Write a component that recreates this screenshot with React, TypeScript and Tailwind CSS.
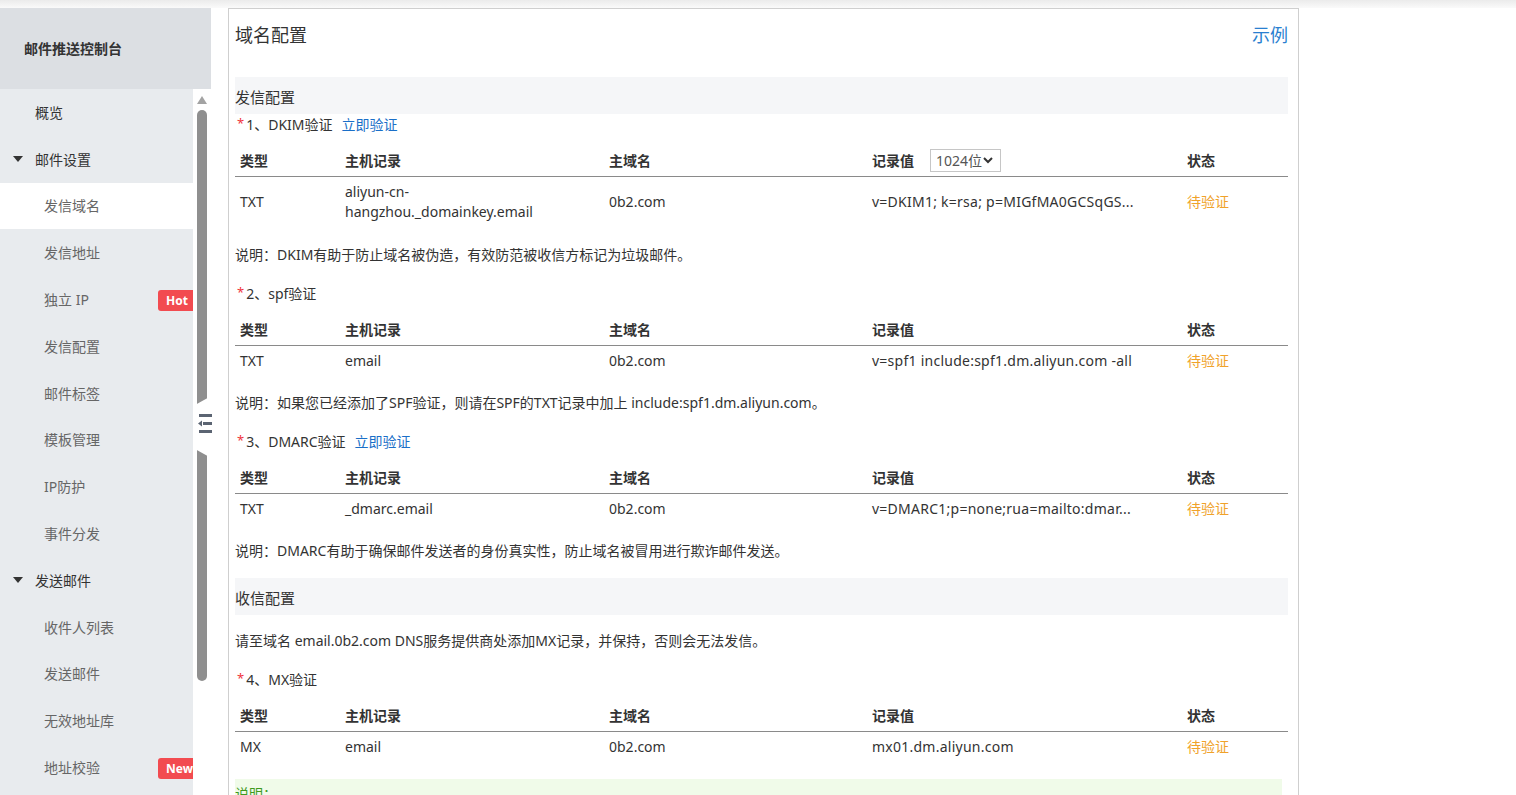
import React from 'react';

const FONT = '"Noto Sans", "Noto Sans CJK SC", sans-serif';

type MenuItem = {
    label: string;
    level: 0 | 1;
    caret?: boolean;
    active?: boolean;
    badge?: 'Hot' | 'New';
};

const menu: MenuItem[] = [
    { label: '概览', level: 0 },
    { label: '邮件设置', level: 0, caret: true },
    { label: '发信域名', level: 1, active: true },
    { label: '发信地址', level: 1 },
    { label: '独立 IP', level: 1, badge: 'Hot' },
    { label: '发信配置', level: 1 },
    { label: '邮件标签', level: 1 },
    { label: '模板管理', level: 1 },
    { label: 'IP防护', level: 1 },
    { label: '事件分发', level: 1 },
    { label: '发送邮件', level: 0, caret: true },
    { label: '收件人列表', level: 1 },
    { label: '发送邮件', level: 1 },
    { label: '无效地址库', level: 1 },
    { label: '地址校验', level: 1, badge: 'New' },
];

type RecordRow = {
    type: string;
    host: React.ReactNode;
    domain: string;
    value: string;
};

const Caret = () => (
    <svg width="10" height="6" viewBox="0 0 10 6" className="absolute left-[13px] top-[20px]">
        <polygon points="0,0 10,0 5,6" fill="#333" />
    </svg>
);

const Sidebar = () => (
    <div className="w-[211px] shrink-0 flex flex-col">
        <div className="h-[81px] bg-[#dcdfe3] flex items-center pl-[24px] text-[14px] font-bold text-[#333]">
            邮件推送控制台
        </div>
        <div className="flex flex-1 relative">
            <div className="w-[193px] bg-[#e8ebee] overflow-hidden">
                {menu.map((item, i) => (
                    <div
                        key={i}
                        className={`relative h-[46.8px] flex items-center text-[14px] ${item.active ? 'bg-white' : ''} ${item.level === 0 ? 'pl-[35px] text-[#333]' : 'pl-[44px] text-[#666]'}`}
                    >
                        {item.caret && <Caret />}
                        {item.label}
                        {item.badge && (
                            <span className="absolute left-[158px] top-[14px] h-[21px] w-[42px] pl-[8px] rounded-l-[3px] bg-[#f24b50] text-white text-[12px] font-bold leading-[21px]">
                                {item.badge}
                            </span>
                        )}
                    </div>
                ))}
            </div>
            <div className="w-[18px] bg-white relative">
                <svg width="10" height="8" viewBox="0 0 10 8" className="absolute left-[4px] top-[7px]">
                    <polygon points="5,0 10,8 0,8" fill="#a3a3a3" />
                </svg>
                <div className="absolute left-[4px] top-[21px] w-[10px] h-[571px] rounded-full bg-[#8f8f8f]" />
                {/* collapse handle */}
                <svg width="18" height="64" viewBox="0 0 18 64" className="absolute left-[2px] top-[306px]">
                    <polygon points="0,10 18,0 18,64 0,54" fill="#ffffff" />
                    <rect x="4" y="19" width="13" height="3" fill="#5b6472" />
                    <rect x="8" y="27" width="9" height="3" fill="#5b6472" />
                    <polygon points="3,28.5 7,25.5 7,31.5" fill="#5b6472" />
                    <rect x="4" y="35" width="13" height="3" fill="#5b6472" />
                </svg>
            </div>
        </div>
    </div>
);

const Label = ({ num, text, link }: { num: string; text: string; link?: boolean }) => (
    <div className="h-[20px] flex items-center text-[14px] text-[#333]">
        <span className="text-[#f0353d] pl-[2px] pr-[2px] text-[13px]">*</span>
        <span>{num}、{text}</span>
        {link && <span className="ml-[9px] text-[#1a6fc8]">立即验证</span>}
    </div>
);

const cols = 'grid grid-cols-[105px_264px_263px_315px_106px]';

const RecordTable = ({ rows, withSelect }: { rows: RecordRow[]; withSelect?: boolean }) => (
    <div className="mt-[10px] text-[14px] text-[#333]">
        <div className={`${cols} h-[33px] items-center font-bold border-b border-[#8a8a8a]`}>
            <div className="pl-[5px]">类型</div>
            <div className="pl-[5px]">主机记录</div>
            <div className="pl-[5px]">主域名</div>
            <div className="pl-[5px] flex items-center">
                记录值
                {withSelect && (
                    <div className="ml-[16px] h-[23px] w-[71px] border border-[#c6c6c6] flex items-center pl-[5px] font-normal text-[#555]">
                        1024位
                        <svg width="10" height="7" viewBox="0 0 10 7" className="ml-[1px]">
                            <polyline points="1,1 5,5 9,1" fill="none" stroke="#333" strokeWidth="2" />
                        </svg>
                    </div>
                )}
            </div>
            <div className="pl-[5px]">状态</div>
        </div>
        {rows.map((r, i) => (
            <div key={i} className={`${cols} py-[5px] items-center leading-[20px]`}>
                <div className="pl-[5px]">{r.type}</div>
                <div className="pl-[5px]">{r.host}</div>
                <div className="pl-[5px]">{r.domain}</div>
                <div className="pl-[5px] whitespace-nowrap tracking-[0.25px]">{r.value}</div>
                <div className="pl-[5px] text-[#f0a22a]">待验证</div>
            </div>
        ))}
    </div>
);

const Note = ({ children, className = '' }: { children: React.ReactNode; className?: string }) => (
    <div className={`h-[20px] leading-[20px] text-[14px] text-[#333] ${className}`}>{children}</div>
);

const Band = ({ title }: { title: string }) => (
    <div className="h-[37px] bg-[#f5f6f8] flex items-center pt-[3px] text-[15px] text-[#333]">{title}</div>
);

export default function App() {
    return (
        <div className="w-[1516px] h-[795px] overflow-hidden bg-white" style={{ fontFamily: FONT }}>
            <div className="h-[8px] bg-gradient-to-b from-[#ebebeb] to-[#fafafa]" />
            <div className="flex h-[787px]">
                <Sidebar />
                <div className="ml-[17px] w-[1071px] border-x border-t border-[#cfcfcf] pl-[6px] pr-[10px] overflow-hidden">
                    <div className="h-[68px] pt-[14px] flex justify-between text-[18px] leading-[24px]">
                        <span className="text-[#333]">域名配置</span>
                        <span className="text-[#2a7fd0]">示例</span>
                    </div>
                    <Band title="发信配置" />
                    <Label num="1" text="DKIM验证" link />
                    <RecordTable
                        withSelect
                        rows={[
                            {
                                type: 'TXT',
                                host: (
                                    <>
                                        aliyun-cn-
                                        <br />
                                        hangzhou._domainkey.email
                                    </>
                                ),
                                domain: '0b2.com',
                                value: 'v=DKIM1; k=rsa; p=MIGfMA0GCSqGS...',
                            },
                        ]}
                    />
                    <Note className="mt-[18px]">说明：DKIM有助于防止域名被伪造，有效防范被收信方标记为垃圾邮件。</Note>
                    <div className="mt-[18px]">
                        <Label num="2" text="spf验证" />
                    </div>
                    <RecordTable
                        rows={[{ type: 'TXT', host: 'email', domain: '0b2.com', value: 'v=spf1 include:spf1.dm.aliyun.com -all' }]}
                    />
                    <Note className="mt-[17px]">说明：如果您已经添加了SPF验证，则请在SPF的TXT记录中加上 include:spf1.dm.aliyun.com。</Note>
                    <div className="mt-[18px]">
                        <Label num="3" text="DMARC验证" link />
                    </div>
                    <RecordTable
                        rows={[{ type: 'TXT', host: '_dmarc.email', domain: '0b2.com', value: 'v=DMARC1;p=none;rua=mailto:dmar...' }]}
                    />
                    <Note className="mt-[17px]">说明：DMARC有助于确保邮件发送者的身份真实性，防止域名被冒用进行欺诈邮件发送。</Note>
                    <div className="mt-[17px]">
                        <Band title="收信配置" />
                    </div>
                    <Note className="mt-[16px]">请至域名 email.0b2.com DNS服务提供商处添加MX记录，并保持，否则会无法发信。</Note>
                    <div className="mt-[18px]">
                        <Label num="4" text="MX验证" />
                    </div>
                    <RecordTable rows={[{ type: 'MX', host: 'email', domain: '0b2.com', value: 'mx01.dm.aliyun.com' }]} />
                    <div className="mt-[17px] mr-[6px] bg-[#f0fbe9] h-[40px] pt-[4px] text-[14px] text-[#3f9a1d]">说明：</div>
                </div>
            </div>
        </div>
    );
}
